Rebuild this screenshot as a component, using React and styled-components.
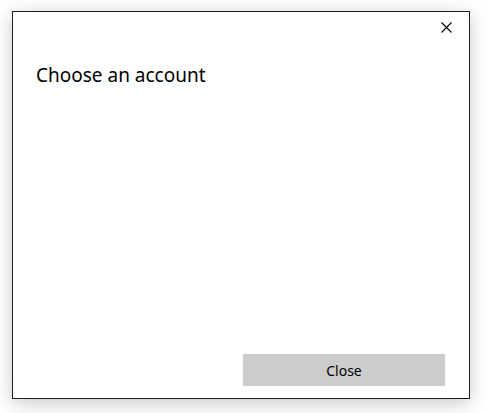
import React from 'react';
import styled, {createGlobalStyle} from "styled-components";

const GlobalStyle = createGlobalStyle`
  html, body {
    margin: 0;
    padding: 0;
    background: #ffffff;
  }

  body {
    font-family: "Noto Sans", "Open Sans", sans-serif;
    color: #000000;
  }
`;

const Page = styled.div`
  width: 489px;
  height: 413px;
  padding: 11px 0 0 12px;
  box-sizing: border-box;
`;

const Dialog = styled.div`
  width: 458px;
  height: 388px;
  box-sizing: border-box;
  border: 1px solid #1f1f1f;
  background: #ffffff;
  box-shadow: 0 4px 18px rgba(0, 0, 0, 0.22);
  display: flex;
  flex-direction: column;
`;

const TopBar = styled.div`
  display: flex;
  justify-content: flex-end;
  padding: 10px 17px 0 0;
`;

const CloseIcon = styled.button`
  width: 11px;
  height: 11px;
  padding: 0;
  border: 0;
  background: transparent;
  display: flex;
  cursor: pointer;

  svg {
    display: block;
  }
`;

const Title = styled.h1`
  margin: 29px 0 0 23px;
  font-size: 19px;
  font-weight: 400;
  line-height: 26px;
`;

const Body = styled.div`
  flex: 1;
`;

const Footer = styled.div`
  display: flex;
  justify-content: flex-end;
  padding: 0 24px 12px 0;
`;

const Button = styled.button`
  width: 202px;
  height: 32px;
  border: 0;
  background: #cccccc;
  font-family: "Noto Sans", "Open Sans", sans-serif;
  font-size: 14px;
  color: #000000;
  cursor: pointer;
`;

const App = () => {
    return (
        <Page>
            <GlobalStyle/>
            <Dialog>
                <TopBar>
                    <CloseIcon aria-label="Close">
                        <svg width="11" height="11" viewBox="0 0 11 11">
                            <path d="M0.5 0.5 L10.5 10.5 M10.5 0.5 L0.5 10.5" stroke="#000" strokeWidth="1.1"/>
                        </svg>
                    </CloseIcon>
                </TopBar>
                <Title>Choose an account</Title>
                <Body/>
                <Footer>
                    <Button>Close</Button>
                </Footer>
            </Dialog>
        </Page>
    );
};

export default App;
